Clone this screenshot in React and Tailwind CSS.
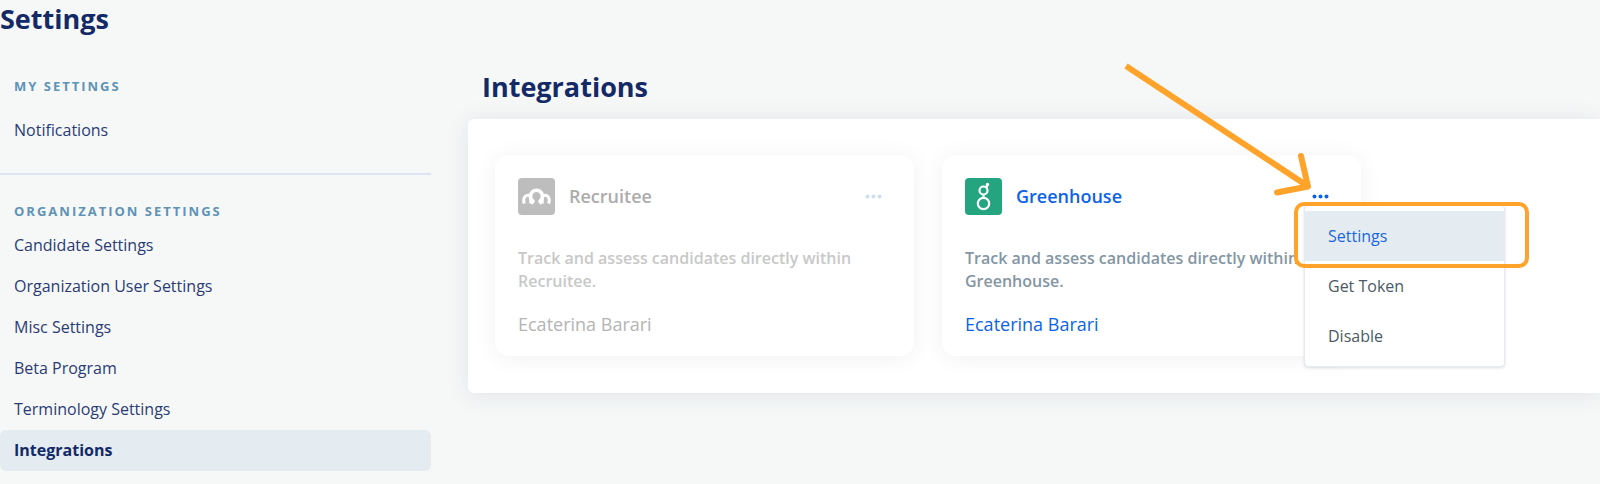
import { useState } from 'react';

const orgLinks = [
  'Candidate Settings',
  'Organization User Settings',
  'Misc Settings',
  'Beta Program',
  'Terminology Settings',
  'Integrations',
];

const menuItems = ['Settings', 'Get Token', 'Disable'];

function RecruiteeLogo() {
  return (
    <svg className="w-[37px] h-[37px]" viewBox="0 0 37 37" aria-hidden="true">
      <rect width="37" height="37" rx="4" fill="#bdbdbd" />
      <g fill="none" stroke="#fff" strokeLinejoin="round">
        <path d="M13 25.500L15 23.300C12.800 21.800 12.500 20 12.500 18.300A6 6 0 0 1 24.500 18.300C24.500 20 24.200 21.800 22 23.300L24 25.500" strokeWidth="3.600" />
        <path d="M6.500 25.500C5.700 24 5.500 22.500 5.800 21A4.600 4.600 0 0 1 12.500 17.800M30.500 25.500C31.300 24 31.500 22.500 31.200 21A4.600 4.600 0 0 0 24.500 17.800" strokeWidth="3" />
      </g>
      <path d="M12 20.500V25.500M25 20.500V25.500" stroke="#fff" strokeWidth="1.500" />
    </svg>
  );
}

function GreenhouseLogo() {
  return (
    <svg className="w-[37px] h-[37px]" viewBox="0 0 37 37" aria-hidden="true">
      <rect width="37" height="37" rx="4" fill="#24a47f" />
      <g fill="none" stroke="#fff" strokeWidth="2.200">
        <circle cx="18.500" cy="12.500" r="4" />
        <circle cx="18.500" cy="25.500" r="5.700" />
        <path d="M18.500 16.500V19.800M21.300 9.700L22.500 7" />
      </g>
      <circle cx="22.500" cy="6.500" r="1.700" fill="#fff" />
    </svg>
  );
}

function Dots() {
  return (
    <svg className="w-[17px] h-[5px]" viewBox="0 0 17 5" fill="currentColor" aria-hidden="true">
      <circle cx="2.500" cy="2.500" r="2" />
      <circle cx="8.500" cy="2.500" r="2" />
      <circle cx="14.500" cy="2.500" r="2" />
    </svg>
  );
}

function Arrow() {
  return (
    <svg className="absolute right-[17px] bottom-2.5 w-[190px] h-[140px] max-w-none pointer-events-none" viewBox="0 0 190 140" fill="none" stroke="#ffa32b" strokeWidth="6" strokeLinejoin="round" aria-hidden="true">
      <path d="M4 9L184 128" />
      <path d="M179 99L186 129.500L155 135.500" strokeLinecap="round" />
    </svg>
  );
}

function ActionMenu() {
  return (
    <div className="absolute -left-2 top-[18px] z-10">
      <ul role="menu" className="w-[201px] py-[5px] bg-white rounded border border-[#e3ebf1] shadow-[0_1px_3px_rgba(0,0,0,0.12)]">
        {menuItems.map((item, i) => (
          <li key={item} role="none">
            <button type="button" role="menuitem"
              className={`block w-full h-[50px] px-[23px] text-left text-base ${i === 0 ? 'bg-[#e4ecf2] text-[#1a66e0]' : 'text-[#4a5a66]'}`}>
              {item}
            </button>
          </li>
        ))}
      </ul>
      <div className="absolute left-[-10px] top-[-3px] w-[235px] h-[66px] rounded-[10px] border-4 border-[#ffa32b] pointer-events-none" />
    </div>
  );
}

function IntegrationCard({ name, logo, owner, active, menuOpen, onToggle }) {
  return (
    <article className="w-[419px] shrink-0 h-[201px] px-[23px] pt-[23px] bg-white rounded-[14px] shadow-[0_2px_24px_rgba(0,0,0,0.06)]">
      <div className="flex items-center">
        {logo}
        <h3 className={`ml-3.5 text-lg leading-6 pb-0.5 font-semibold ${active ? 'text-[#0d63e8]' : 'text-[#acacac]'}`}>{name}</h3>
        <div className="relative ml-auto mr-[9px] flex">
          <button type="button" aria-label={`${name} actions`} aria-expanded={menuOpen} onClick={onToggle}
            className={`flex h-5 items-center ${active ? 'text-[#0d63e8]' : 'text-[#cfdff0]'}`}>
            <Dots />
          </button>
          {menuOpen && <ActionMenu />}
          {menuOpen && <Arrow />}
        </div>
      </div>
      <p className={`mt-8 text-base leading-[23px] font-semibold ${active ? 'text-[#8496a3]' : 'text-[#c8c8c8]'}`}>
        Track and assess candidates directly within {name}.
      </p>
      <p className={`mt-[17px] text-lg leading-7 ${active ? 'text-[#0d63e8]' : 'text-[#b4b4b4]'}`}>{owner}</p>
    </article>
  );
}

export default function App() {
  const [menuOpen, setMenuOpen] = useState(true);

  return (
    <div className="min-h-screen overflow-hidden bg-[#f6f8f8] font-['Open_Sans',sans-serif] text-[#142a66]">
      <h1 className="text-[27px] leading-[37px] font-bold">Settings</h1>
      <div className="flex">
        <nav className="w-[431px] shrink-0 pt-[39px]" aria-label="Settings">
          <h2 className="px-3.5 text-[13px] leading-5 font-bold tracking-[2px] text-[#5f93b5]">MY SETTINGS</h2>
          <a href="#notifications" className="block mt-3.5 px-3.5 text-base leading-10 text-[#2b3c74]">Notifications</a>
          <hr className="mt-[23px] border-t-2 border-[#dbe5f3]" />
          <h2 className="mt-[26px] px-3.5 text-[13px] leading-5 font-bold tracking-[2px] text-[#5f93b5]">ORGANIZATION SETTINGS</h2>
          <ul className="mt-1">
            {orgLinks.map((link) => (
              <li key={link}>
                <a href="#settings"
                  className={`block px-3.5 rounded-md text-base leading-[41px] ${link === 'Integrations' ? 'bg-[#e4ecf2] font-bold' : 'text-[#2b3c74]'}`}>
                  {link}
                </a>
              </li>
            ))}
          </ul>
        </nav>
        <main className="flex-1 min-w-0 ml-[37px] pt-[31px]">
          <h2 className="pl-3.5 text-[27px] leading-[38px] font-bold">Integrations</h2>
          <section className="mt-[13px] flex gap-7 pl-[27px] pt-9 pb-[37px] bg-white rounded-l-md shadow-[0_2px_24px_rgba(30,40,60,0.1)]">
            <IntegrationCard name="Recruitee" logo={<RecruiteeLogo />} owner="Ecaterina Barari" />
            <IntegrationCard name="Greenhouse" logo={<GreenhouseLogo />} owner="Ecaterina Barari" active
              menuOpen={menuOpen} onToggle={() => setMenuOpen(!menuOpen)} />
          </section>
        </main>
      </div>
    </div>
  );
}
